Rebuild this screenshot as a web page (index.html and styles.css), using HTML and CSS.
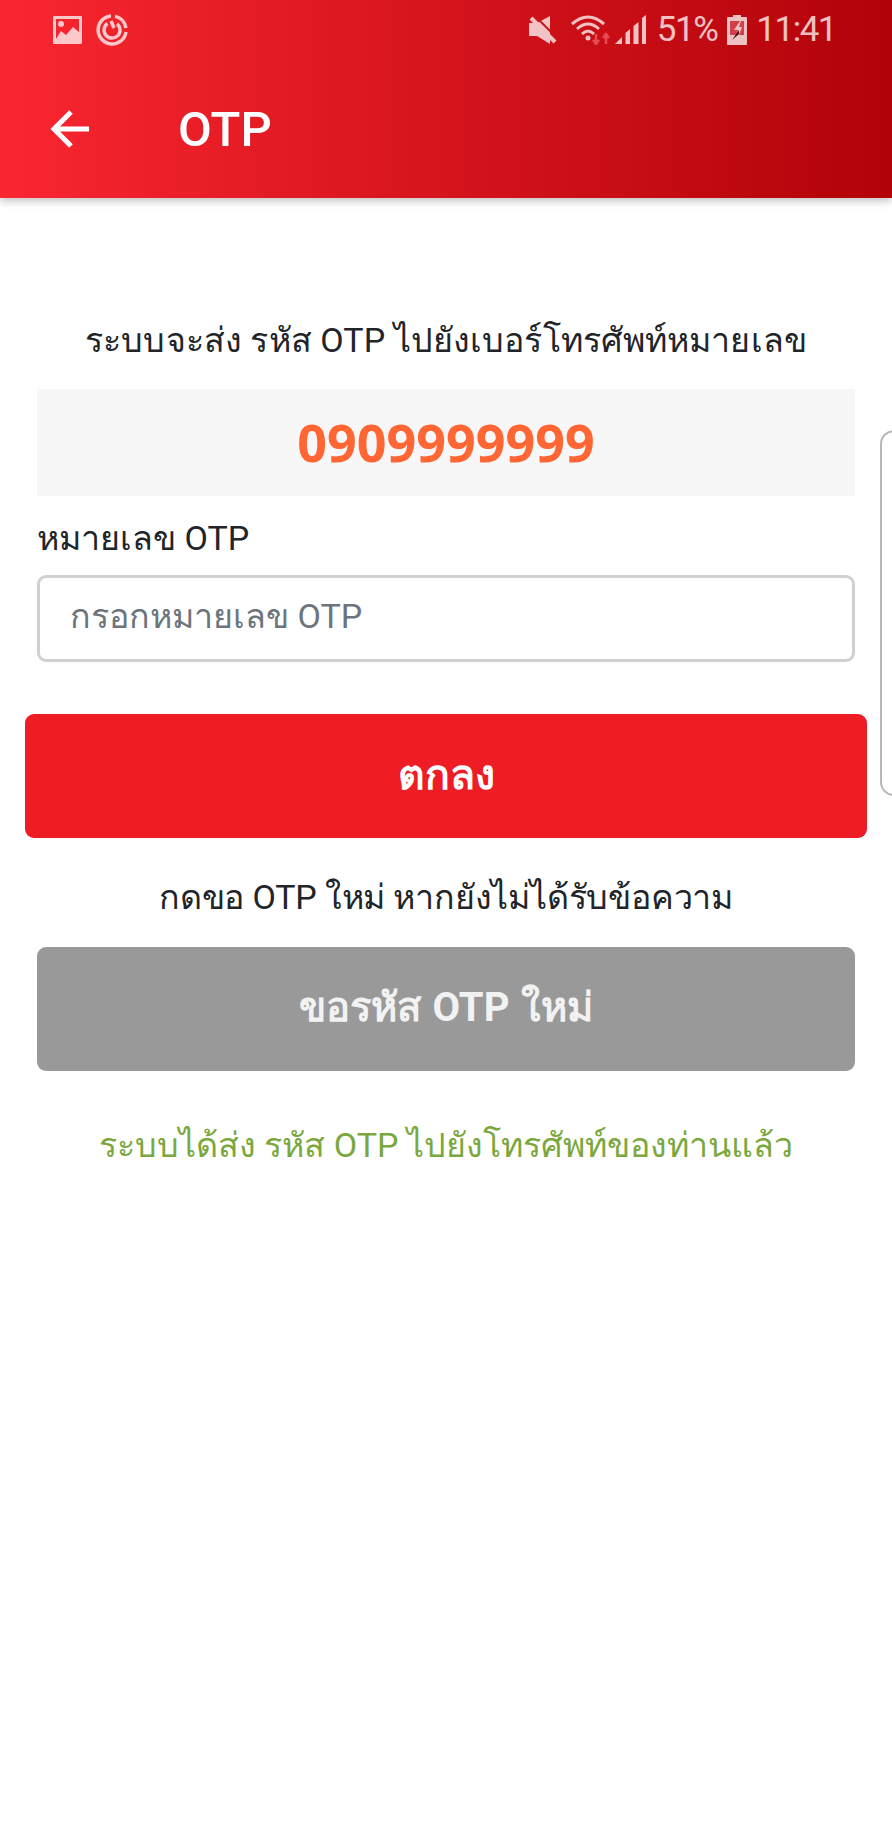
FILE: index.html
```html
<!DOCTYPE html>
<html lang="th">
<head>
    <meta charset="UTF-8" />
    <meta name="viewport" content="width=device-width, initial-scale=1" />
    <title>OTP</title>
    <link rel="stylesheet" href="styles.css">
</head>
<body>
    <header class="app-header">
        <div class="status-bar">
            <div class="status-left">
                <svg class="icon-fill" width="29" height="28" viewBox="0 0 29 28">
                    <path fill-rule="evenodd" d="M1 0h27a1 1 0 0 1 1 1v26a1 1 0 0 1-1 1H1a1 1 0 0 1-1-1V1a1 1 0 0 1 1-1zM3 3v20l5-8 5 4 7-8 6 5V3zM8 5a3 3 0 1 1 0 6 3 3 0 0 1 0-6z"/>
                </svg>
                <svg class="icon-line" width="32" height="32" viewBox="0 0 32 32">
                    <path d="M15 2A14 14 0 1 0 30 18" />
                    <path d="M19 2.300A14 14 0 0 1 30 14" />
                    <path d="M11.500 9.500A8 8 0 1 0 21 9.800" />
                    <path d="M15 7l3 7" />
                </svg>
            </div>
            <div class="status-right">
                <svg class="icon-fill icon-mute" width="28" height="28" viewBox="0 0 28 28">
                    <path d="M0 7h8L21 0v28L8 20H0z"/>
                    <path class="slash-gap" d="M6 0l22 22"/>
                    <path class="slash" d="M2 2l24 24"/>
                </svg>
                <svg class="icon-line icon-wifi" width="40" height="30" viewBox="0 0 40 30">
                    <path d="M1 9Q17-5 33 9"/>
                    <path d="M6 14Q17 4 28 14"/>
                    <path d="M11 19Q17 13 23 19"/>
                    <circle cx="17" cy="23" r="2.500"/>
                    <path class="arrows" d="M25 19v10M22 25l3 4 3-4M35 29V19M32 23l3-4 3 4"/>
                </svg>
                <svg class="icon-fill icon-signal" width="31" height="30" viewBox="0 0 31 30">
                    <path d="M0 29l7-7v7z"/>
                    <path d="M10.500 18l4.500-4v15h-4.500z"/>
                    <path d="M18.500 11l5-4v22h-5z"/>
                    <path d="M27 3l4-3v29h-4z"/>
                </svg>
                <span class="status-text status-battery-text">51%</span>
                <svg class="icon-fill icon-battery" width="20" height="30" viewBox="0 0 20 30">
                    <path d="M6 0h8v2h5a1 1 0 0 1 1 1v26a1 1 0 0 1-1 1H1a1 1 0 0 1-1-1V3a1 1 0 0 1 1-1h5z"/>
                    <path class="battery-empty" d="M3 6h14v14H3z"/>
                    <path d="M13 6L7 15h4l-1.500 5H12l3-8h-3l2-6z"/>
                    <path class="bolt" d="M12 15L5 25l7-6z"/>
                </svg>
                <span class="status-text">11:41</span>
            </div>
        </div>
        <div class="toolbar">
            <svg class="icon-back" width="40" height="38" viewBox="0 0 40 38">
                <path d="M39 19H4M21 2L4 19l17 17"/>
            </svg>
            <h1>OTP</h1>
        </div>
    </header>

    <main class="content">
        <p class="intro">ระบบจะส่ง รหัส OTP ไปยังเบอร์โทรศัพท์หมายเลข</p>
        <div class="phone-box">0909999999</div>
        <label class="otp-label" for="otp">หมายเลข OTP</label>
        <input class="otp-input" id="otp" type="text" placeholder="กรอกหมายเลข OTP" />
        <button class="btn btn-confirm" type="button">ตกลง</button>
        <p class="hint">กดขอ OTP ใหม่ หากยังไม่ได้รับข้อความ</p>
        <button class="btn btn-resend" type="button">ขอรหัส OTP ใหม่</button>
        <p class="sent">ระบบได้ส่ง รหัส OTP ไปยังโทรศัพท์ของท่านแล้ว</p>
    </main>

    <div class="edge-panel"></div>
</body>
</html>
```

FILE: styles.css
```css
html, body { margin: 0; padding: 0; }
body { width: 892px; height: 1834px; background: #fff; color: #212529; font-family: Roboto, "Noto Sans", sans-serif; overflow: hidden; position: relative; }

.app-header { height: 198px; background: linear-gradient(90deg, #f92630 0%, #b20209 100%); box-shadow: 0 3px 8px rgba(0, 0, 0, 0.25); color: #fff; }

.status-bar { height: 60px; padding: 0 56px 0 53px; display: flex; justify-content: space-between; align-items: center; opacity: 0.75; }
.status-left { display: flex; align-items: center; gap: 14px; }
.status-right { display: flex; align-items: center; }
.status-text { font-size: 35px; line-height: 40px; letter-spacing: -1.5px; color: #fff; }
.status-battery-text { margin-right: 10px; }

.icon-fill { fill: #fff; }
.icon-line { fill: none; stroke: #fff; stroke-width: 3.5; }
.icon-line circle { fill: #fff; stroke: none; }
.icon-mute { margin-right: 14px; }
.icon-mute .slash { fill: none; stroke: #fff; stroke-width: 4; }
.icon-mute .slash-gap { fill: none; stroke: #c8141c; stroke-width: 2; }
.icon-wifi { margin-right: 4px; stroke-width: 3; }
.icon-wifi .arrows { stroke: #f0606a; stroke-width: 2.5; }
.icon-signal { margin-right: 11px; }
.icon-battery { margin-right: 9px; }
.battery-empty { fill: #d9535c; }
.bolt { fill: #111; }

.toolbar { height: 138px; padding-left: 50px; display: flex; align-items: center; }
.icon-back { fill: none; stroke: #fff; stroke-width: 5; }
.toolbar h1 { margin: 2px 0 0 88px; font-size: 49px; font-weight: 500; line-height: 56px; }

.content { padding: 0 37px; }
.intro, .hint, .sent { margin: 0; text-align: center; font-size: 34px; line-height: 50px; }
.intro { margin-top: 117px; letter-spacing: 0.1px; }

.phone-box { margin-top: 24px; height: 107px; background: #f7f7f7; color: #ff6633; font-size: 52px; font-weight: 700; line-height: 105px; text-align: center; font-family: "Noto Sans", sans-serif; }

.otp-label { display: block; margin-top: 17px; font-size: 34px; line-height: 50px; }
.otp-input { display: block; box-sizing: border-box; width: 100%; height: 87px; margin-top: 12px; padding: 0 30px 6px; border: 3px solid #d0d0d0; border-radius: 9px; background: #fff; font-family: inherit; font-size: 34px; color: #212529; }
.otp-input::placeholder { color: #6c757d; opacity: 1; }

.btn { display: block; border: 0; border-radius: 9px; color: #fff; font-family: inherit; font-weight: 700; height: 124px; padding: 0 0 4px; }
.btn-confirm { width: 842px; margin: 52px 0 0 -12px; background: #ee1c25; font-size: 41px; }
.hint { margin-top: 34px; letter-spacing: -0.2px; }
.btn-resend { width: 100%; margin-top: 25px; background: #999; color: #f2f2f2; font-size: 40px; word-spacing: 2px; }
.sent { margin-top: 49px; color: #7ba83e; }

.edge-panel { position: absolute; left: 880px; top: 430px; width: 30px; height: 366px; box-sizing: border-box; border: 2px solid #b8b8b8; border-radius: 14px; background: #fff; }
```
